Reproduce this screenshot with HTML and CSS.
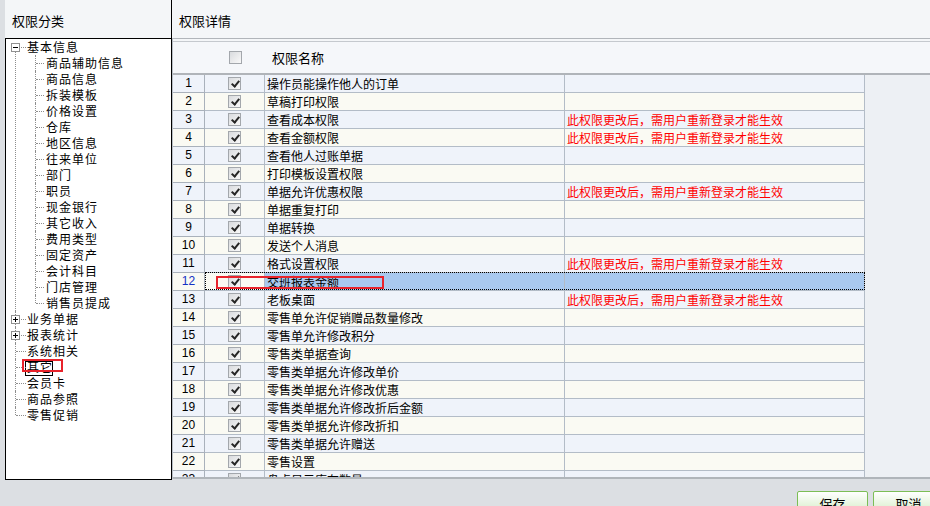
FILE: index.html
```html
<!DOCTYPE html>
<html lang="zh-CN">
<head>
    <meta charset="UTF-8">
    <title>权限设置</title>
    <link rel="stylesheet" href="styles.css">
</head>
<body>

    <div class="window">
        <div class="panes">
            <!-- 左侧：权限分类树 -->
            <div class="left-pane">
                <div class="pane-title">权限分类</div>
                <div class="tree-box">
                    <ul class="tree">
                        <li class="open"><span class="exp"></span><span class="label">基本信息</span>
                            <ul>
                                <li><span class="label">商品辅助信息</span></li>
                                <li><span class="label">商品信息</span></li>
                                <li><span class="label">拆装模板</span></li>
                                <li><span class="label">价格设置</span></li>
                                <li><span class="label">仓库</span></li>
                                <li><span class="label">地区信息</span></li>
                                <li><span class="label">往来单位</span></li>
                                <li><span class="label">部门</span></li>
                                <li><span class="label">职员</span></li>
                                <li><span class="label">现金银行</span></li>
                                <li><span class="label">其它收入</span></li>
                                <li><span class="label">费用类型</span></li>
                                <li><span class="label">固定资产</span></li>
                                <li><span class="label">会计科目</span></li>
                                <li><span class="label">门店管理</span></li>
                                <li><span class="label">销售员提成</span></li>
                            </ul>
                        </li>
                        <li class="closed"><span class="exp"></span><span class="label">业务单据</span></li>
                        <li class="closed"><span class="exp"></span><span class="label">报表统计</span></li>
                        <li><span class="label">系统相关</span></li>
                        <li><span class="label focused">其它</span></li>
                        <li><span class="label">会员卡</span></li>
                        <li><span class="label">商品参照</span></li>
                        <li><span class="label">零售促销</span></li>
                    </ul>
                </div>
            </div>

            <!-- 右侧：权限详情表格 -->
            <div class="right-pane">
                <div class="pane-title">权限详情</div>
                <div class="grid-box">
                    <div class="grid-head">
                        <div class="head-num"></div>
                        <div class="head-chk"><span class="cb"></span></div>
                        <div class="head-name">权限名称</div>
                    </div>
                    <div class="grid-body">
                        <div class="rows">
                            <div class="row odd"><div class="num">1</div><div class="chk"><span class="cb on"></span></div><div class="name">操作员能操作他人的订单</div><div class="note"></div></div>
                            <div class="row even"><div class="num">2</div><div class="chk"><span class="cb on"></span></div><div class="name">草稿打印权限</div><div class="note"></div></div>
                            <div class="row odd"><div class="num">3</div><div class="chk"><span class="cb on"></span></div><div class="name">查看成本权限</div><div class="note">此权限更改后，需用户重新登录才能生效</div></div>
                            <div class="row even"><div class="num">4</div><div class="chk"><span class="cb on"></span></div><div class="name">查看金额权限</div><div class="note">此权限更改后，需用户重新登录才能生效</div></div>
                            <div class="row odd"><div class="num">5</div><div class="chk"><span class="cb on"></span></div><div class="name">查看他人过账单据</div><div class="note"></div></div>
                            <div class="row even"><div class="num">6</div><div class="chk"><span class="cb on"></span></div><div class="name">打印模板设置权限</div><div class="note"></div></div>
                            <div class="row odd"><div class="num">7</div><div class="chk"><span class="cb on"></span></div><div class="name">单据允许优惠权限</div><div class="note">此权限更改后，需用户重新登录才能生效</div></div>
                            <div class="row even"><div class="num">8</div><div class="chk"><span class="cb on"></span></div><div class="name">单据重复打印</div><div class="note"></div></div>
                            <div class="row odd"><div class="num">9</div><div class="chk"><span class="cb on"></span></div><div class="name">单据转换</div><div class="note"></div></div>
                            <div class="row even"><div class="num">10</div><div class="chk"><span class="cb on"></span></div><div class="name">发送个人消息</div><div class="note"></div></div>
                            <div class="row odd"><div class="num">11</div><div class="chk"><span class="cb on"></span></div><div class="name">格式设置权限</div><div class="note">此权限更改后，需用户重新登录才能生效</div></div>
                            <div class="row even sel"><div class="num">12</div><div class="chk"><span class="cb on"></span></div><div class="name">交班报表金额</div><div class="note"></div></div>
                            <div class="row odd"><div class="num">13</div><div class="chk"><span class="cb on"></span></div><div class="name">老板桌面</div><div class="note">此权限更改后，需用户重新登录才能生效</div></div>
                            <div class="row even"><div class="num">14</div><div class="chk"><span class="cb on"></span></div><div class="name">零售单允许促销赠品数量修改</div><div class="note"></div></div>
                            <div class="row odd"><div class="num">15</div><div class="chk"><span class="cb on"></span></div><div class="name">零售单允许修改积分</div><div class="note"></div></div>
                            <div class="row even"><div class="num">16</div><div class="chk"><span class="cb on"></span></div><div class="name">零售类单据查询</div><div class="note"></div></div>
                            <div class="row odd"><div class="num">17</div><div class="chk"><span class="cb on"></span></div><div class="name">零售类单据允许修改单价</div><div class="note"></div></div>
                            <div class="row even"><div class="num">18</div><div class="chk"><span class="cb on"></span></div><div class="name">零售类单据允许修改优惠</div><div class="note"></div></div>
                            <div class="row odd"><div class="num">19</div><div class="chk"><span class="cb on"></span></div><div class="name">零售类单据允许修改折后金额</div><div class="note"></div></div>
                            <div class="row even"><div class="num">20</div><div class="chk"><span class="cb on"></span></div><div class="name">零售类单据允许修改折扣</div><div class="note"></div></div>
                            <div class="row odd"><div class="num">21</div><div class="chk"><span class="cb on"></span></div><div class="name">零售类单据允许赠送</div><div class="note"></div></div>
                            <div class="row even"><div class="num">22</div><div class="chk"><span class="cb on"></span></div><div class="name">零售设置</div><div class="note"></div></div>
                            <div class="row odd"><div class="num">23</div><div class="chk"><span class="cb on"></span></div><div class="name">盘点显示库存数量</div><div class="note"></div></div>
                        </div>
                        <div class="filler"></div>
                    </div>
                </div>
            </div>
        </div>

        <div class="footer">
            <div class="buttons">
                <button class="btn">保存</button>
                <button class="btn">取消</button>
            </div>
        </div>

        <!-- 标注框 -->
        <div class="mark mark-tree"></div>
        <div class="mark mark-row"></div>
    </div>

</body>
</html>
```

FILE: styles.css
```css
body {
    margin: 0;
    padding: 0;
    background: #dcdfe3;
    font-family: "Noto Sans CJK SC", "Liberation Sans", sans-serif;
    font-size: 12px;
    color: #000;
}

.window {
    position: relative;
    width: 930px;
    height: 506px;
    overflow: hidden;
}

.panes {
    display: flex;
    height: 480px;
}

.pane-title {
    height: 36px;
    padding: 2px 0 0 7px;
    background: #f4f6f8;
    font-size: 13px;
    display: flex;
    align-items: center;
}

/* Left pane */
.left-pane {
    width: 167px;
    margin-left: 5px;
    flex-shrink: 0;
}

.left-pane .pane-title {
    border-right: 1px solid #000;
}

.tree-box {
    height: 442px;
    box-sizing: border-box;
    border: 1px solid #000;
    background: #fff;
    overflow: hidden;
}

.tree,
.tree ul {
    list-style: none;
    margin: 0;
    padding: 0;
}

.tree {
    font-size: 12px;
    letter-spacing: 1px;
    line-height: 16px;
}

.tree li {
    position: relative;
    padding-left: 21px;
    white-space: nowrap;
}

.label {
    display: inline-block;
    height: 16px;
    vertical-align: top;
}

/* vertical connector */
.tree li::before {
    content: '';
    position: absolute;
    left: 9px;
    top: 0;
    bottom: 0;
    border-left: 1px dotted #8e8e8e;
}

.tree > li:first-child::before {
    top: 8px;
}

.tree li:last-child::before {
    bottom: auto;
    height: 8px;
}

/* horizontal connector */
.tree li::after {
    content: '';
    position: absolute;
    left: 10px;
    top: 8px;
    width: 10px;
    border-top: 1px dotted #8e8e8e;
}

.tree ul li {
    padding-left: 19px;
}

.tree ul li::before {
    left: 8px;
}

.tree ul li:last-child::before {
    height: 8px;
}

.tree ul li::after {
    left: 9px;
    width: 8px;
}

.exp {
    position: absolute;
    left: 5px;
    top: 4px;
    width: 7px;
    height: 7px;
    border: 1px solid #909090;
    background: #fff;
    z-index: 1;
}

.exp::before {
    content: '';
    position: absolute;
    left: 1px;
    top: 3px;
    width: 5px;
    height: 1px;
    background: #000;
}

.closed > .exp::after {
    content: '';
    position: absolute;
    left: 3px;
    top: 1px;
    width: 1px;
    height: 5px;
    background: #000;
}

.label.focused {
    position: relative;
}

.label.focused::after {
    content: '';
    position: absolute;
    left: -2px;
    right: 0;
    top: 2px;
    bottom: -1px;
    border: 1px solid #000;
}

/* Right pane */
.right-pane {
    flex: 1;
}

.grid-box {
    height: 441px;
    box-sizing: border-box;
    border-top: 1px solid #b1b5ba;
    border-left: 1px solid #b9bfc6;
    padding-top: 2px;
    background: #f4f6f8;
    display: flex;
    flex-direction: column;
}

.grid-head {
    height: 31px;
    flex-shrink: 0;
    border-top: 1px solid #c5c9ce;
    border-bottom: 2px solid #b0b4b9;
    background: #f5f7fa;
    display: flex;
    align-items: center;
}

.head-num {
    width: 32px;
}

.head-chk {
    width: 60px;
    display: flex;
    justify-content: center;
}

.head-name {
    padding-left: 7px;
    font-size: 13px;
}

.grid-body {
    display: flex;
    height: 402px;
    overflow: hidden;
    border-bottom: 2px solid #b0b5ba;
}

.rows {
    width: 692px;
    flex-shrink: 0;
}

.filler {
    flex: 1;
    background: #edf0f4;
}

.row {
    display: flex;
    height: 18px;
}

.row > div {
    height: 17px;
    line-height: 17px;
    border-right: 1px solid #b3bcc7;
    border-bottom: 1px solid #b3bcc7;
    white-space: nowrap;
    overflow: hidden;
}

.row.odd > div {
    background: #eff3fa;
}

.row.even > div {
    background: #fafaf3;
}

.row > .num {
    width: 31px;
    text-align: center;
    font-family: "Liberation Sans", Arial, sans-serif;
    font-size: 12px;
    background: linear-gradient(#f8f9fb, #e2e6ea);
    border-right-color: #a9b1bb;
    border-bottom-color: #a9b1bb;
}

.row > .chk {
    width: 59px;
    display: flex;
    align-items: center;
    justify-content: center;
}

.name,
.note {
    width: 297px;
    padding-left: 2px;
}

.note {
    color: #ff0000;
}

/* selected row */
.row.sel {
    position: relative;
}

.row.sel > .num {
    color: #1431c4;
}

.row.sel > .name,
.row.sel > .note {
    background: #a9c9ef;
}

.row.sel::after {
    content: '';
    position: absolute;
    left: 32px;
    top: -1px;
    width: 658px;
    height: 16px;
    border: 1px dotted #000;
}

/* Checkboxes */
.cb {
    display: inline-block;
    position: relative;
    width: 11px;
    height: 11px;
    border: 1px solid #a3a7ac;
    background: linear-gradient(135deg, #d9dbde, #f9f9f9);
    box-sizing: content-box;
}

.cb.on::after {
    content: '';
    position: absolute;
    left: 4px;
    top: 1px;
    width: 3px;
    height: 6px;
    border: solid #262626;
    border-width: 0 2px 2px 0;
    transform: rotate(40deg);
}

/* Footer */
.footer {
    height: 26px;
    display: flex;
    justify-content: flex-end;
}

.buttons {
    display: flex;
    gap: 5px;
    margin-top: 11px;
    margin-right: -14px;
}

.btn {
    width: 71px;
    height: 24px;
    border: 1px solid #7cbe56;
    border-radius: 2px;
    background: linear-gradient(#ffffff, #d3ecc3);
    font-family: "Noto Sans CJK SC", sans-serif;
    font-size: 13px;
    color: #000;
    padding: 0;
}

/* Annotation boxes */
.mark {
    position: absolute;
    border: 2px solid #e8232b;
    box-sizing: border-box;
}

.mark-tree {
    left: 22px;
    top: 359px;
    width: 41px;
    height: 13px;
}

.mark-row {
    left: 216px;
    top: 276px;
    width: 168px;
    height: 13px;
}
```
